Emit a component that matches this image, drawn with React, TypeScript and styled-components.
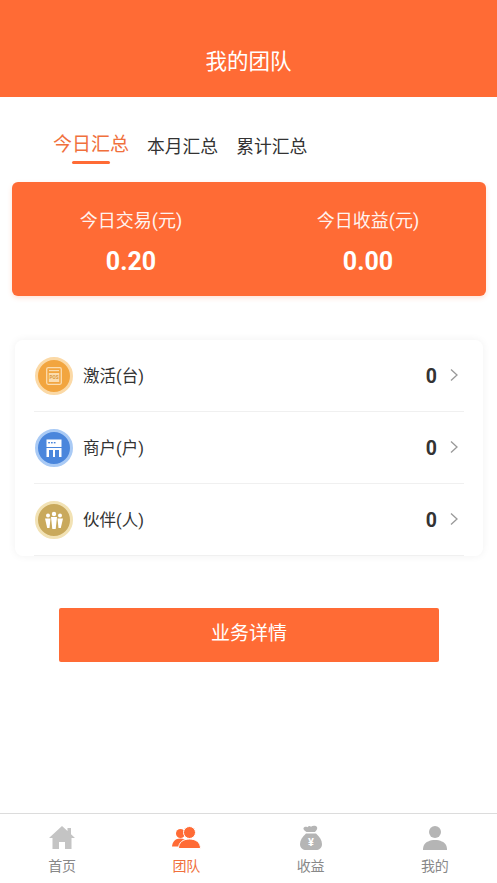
import React from "react";
import styled, { createGlobalStyle } from "styled-components";

const Global = createGlobalStyle`
  html, body { margin: 0; padding: 0; background: #fff; }
  body { font-family: Roboto, "Noto Sans CJK SC", sans-serif; }
  * { box-sizing: border-box; }
`;

const ORANGE = "#ff6b35";

const Page = styled.div`
  width: 497px;
  height: 883px;
  display: flex;
  flex-direction: column;
  overflow: hidden;
`;
const Header = styled.header`
  height: 97px;
  flex: none;
  background: ${ORANGE};
  color: #fff;
  font-size: 21.5px;
  line-height: 30px;
  text-align: center;
  padding-top: 47px;
`;
const Content = styled.main`
  flex: 1;
  display: flex;
  flex-direction: column;
`;
const Tabs = styled.nav`
  display: flex;
  align-items: flex-start;
  height: 85px;
  padding: 33px 0 0 53px;
`;
const Tab = styled.div<{ $active?: boolean }>`
  display: flex;
  flex-direction: column;
  align-items: center;
  margin-right: 18px;
  color: ${(p) => (p.$active ? "#f0703c" : "#333")};
  font-size: ${(p) => (p.$active ? 19 : 17.8)}px;
  line-height: 28px;
  padding-top: ${(p) => (p.$active ? 1 : 3)}px;
`;
const TabLine = styled.span`
  width: 38px;
  height: 3px;
  margin-top: 2px;
  border-radius: 2px;
  background: ${ORANGE};
`;
const Summary = styled.section`
  margin: 0 11px 0 12px;
  height: 114px;
  background: ${ORANGE};
  border-radius: 6px;
  box-shadow: 0 2px 5px rgba(255, 107, 53, 0.2);
  color: #fff;
  display: grid;
  grid-template-columns: 238px 236px;
  padding-top: 26px;
`;
const Stat = styled.div`
  text-align: center;
`;
const StatLabel = styled.div`
  font-size: 18px;
  line-height: 26px;
  opacity: 0.92;
`;
const StatValue = styled.div`
  font-size: 25px;
  font-weight: 700;
  line-height: 30px;
  margin-top: 13px;
`;
const ListCard = styled.section`
  margin: 44px 14px 0 15px;
  height: 216px;
  background: #fff;
  border-radius: 8px;
  box-shadow: 0 0 8px rgba(0, 0, 0, 0.06);
  padding: 0 19px;
`;
const Row = styled.div`
  height: 72px;
  display: flex;
  align-items: center;
  border-bottom: 1px solid #f0f0f0;
  padding-top: 1px;
`;
const IconRing = styled.div<{ $c: string; $r: string }>`
  width: 38px;
  height: 38px;
  margin-left: 1px;
  border-radius: 50%;
  background: ${(p) => p.$c};
  border: 3px solid ${(p) => p.$r};
  display: flex;
  align-items: center;
  justify-content: center;
`;
const RowLabel = styled.div`
  flex: 1;
  margin: 2px 0 0 10px;
  font-size: 16.5px;
  line-height: 24px;
  color: #333;
`;
const RowValue = styled.div`
  margin-top: 2px;
  font-size: 19.5px;
  font-weight: 700;
  line-height: 24px;
  color: #333;
`;
const Chevron = styled.svg`
  width: 10px;
  height: 16px;
  margin: -3px 5px 0 12px;
`;
const Action = styled.button`
  display: block;
  margin: 52px 0 0 59px;
  width: 380px;
  height: 54px;
  border: 0;
  border-radius: 2px;
  background: ${ORANGE};
  color: #fff;
  font: inherit;
  font-size: 19px;
  padding: 0 0 7px;
`;
const TabBar = styled.footer`
  height: 70px;
  flex: none;
  border-top: 1px solid #dcdcdc;
  background: #fff;
  display: grid;
  grid-template-columns: repeat(4, 1fr);
`;
const BarItem = styled.div<{ $active?: boolean }>`
  display: flex;
  flex-direction: column;
  align-items: center;
  padding-top: 11px;
  color: ${(p) => (p.$active ? "#f0703c" : "#888")};
  font-size: 14px;
  line-height: 20px;
`;
const BarIcon = styled.svg`
  width: 30px;
  height: 26px;
  margin-bottom: 5px;
`;

const Pos = () => (
  <svg width="22" height="22" viewBox="0 0 22 22">
    <rect x="3.7" y="2.7" width="14.6" height="16.6" rx="1.5" fill="none" stroke="#fbdcae" strokeWidth="1.3" />
    <rect x="6" y="5" width="10" height="1.2" fill="#fbdcae" />
    <rect x="5.8" y="8" width="10.4" height="9" fill="#fbdcae" />
    <text x="11" y="14.4" fontSize="4.6" fontWeight="700" fill="#d9963a" textAnchor="middle" fontFamily="Roboto">POS</text>
  </svg>
);
const Shop = () => (
  <svg width="22" height="22" viewBox="0 0 22 22">
    <rect x="3.5" y="2.5" width="15" height="7.5" fill="#fff" />
    <rect x="5.2" y="5" width="1.7" height="1.4" fill="#4a86dc" />
    <rect x="8" y="5" width="1.7" height="1.4" fill="#4a86dc" />
    <rect x="10.800" y="5" width="1.7" height="1.4" fill="#4a86dc" />
    <rect x="3.5" y="11" width="15" height="9" fill="#fff" />
    <rect x="6" y="13" width="4" height="7" fill="#4a86dc" />
    <rect x="12" y="13" width="4" height="7" fill="#4a86dc" />
  </svg>
);
const People = () => (
  <svg width="24" height="24" viewBox="0 0 24 24" fill="#fff">
    <circle cx="6" cy="7.5" r="2" />
    <circle cx="12" cy="6" r="2.200" />
    <circle cx="18" cy="7.500" r="2" />
    <path d="M3 10.500h5.500L7.500 20H5.200z" />
    <path d="M9 9h6l-1.300 12h-3.400z" />
    <path d="M15.500 10.500H21L18.800 20h-2.300z" />
  </svg>
);

const rows = [
  { label: "激活(台)", c: "#f2a53f", r: "#fbd9a6", icon: <Pos /> },
  { label: "商户(户)", c: "#4a86dc", r: "#a9caf5", icon: <Shop /> },
  { label: "伙伴(人)", c: "#c9a95c", r: "#f2e2b4", icon: <People /> },
];

export default function App() {
  return (
    <Page>
      <Global />
      <Header>我的团队</Header>
      <Content>
        <Tabs>
          <Tab $active>
            今日汇总
            <TabLine />
          </Tab>
          <Tab>本月汇总</Tab>
          <Tab>累计汇总</Tab>
        </Tabs>
        <Summary>
          <Stat>
            <StatLabel>今日交易(元)</StatLabel>
            <StatValue>0.20</StatValue>
          </Stat>
          <Stat>
            <StatLabel>今日收益(元)</StatLabel>
            <StatValue>0.00</StatValue>
          </Stat>
        </Summary>
        <ListCard>
          {rows.map((r) => (
            <Row key={r.label}>
              <IconRing $c={r.c} $r={r.r}>{r.icon}</IconRing>
              <RowLabel>{r.label}</RowLabel>
              <RowValue>0</RowValue>
              <Chevron viewBox="0 0 10 16">
                <path d="M2 2.500l6 5.500-6 5.500" fill="none" stroke="#999" strokeWidth="1.300" />
              </Chevron>
            </Row>
          ))}
        </ListCard>
        <Action>业务详情</Action>
      </Content>
      <TabBar>
        <BarItem>
          <BarIcon viewBox="0 0 30 26">
            <path d="M15 1L2 13h3.500v11h6.500v-7h6v7h6.500V13H28l-4-3.700V3h-3.500v3z" fill="#c4c4c4" />
          </BarIcon>
          首页
        </BarItem>
        <BarItem $active>
          <BarIcon viewBox="0 0 30 26">
            <circle cx="9.500" cy="8.500" r="4.500" fill={ORANGE} />
            <path d="M1 21.500c.5-4.500 3-8 8.500-8 3 0 5 1 6 2l-4 6z" fill={ORANGE} />
            <circle cx="18.500" cy="7.500" r="6" fill={ORANGE} stroke="#fff" strokeWidth="1" />
            <path d="M7.500 23.500c0-6 4.500-9.500 11-9.500s11 3.500 11 9.500z" fill={ORANGE} stroke="#fff" strokeWidth="1" />
          </BarIcon>
          团队
        </BarItem>
        <BarItem>
          <BarIcon viewBox="0 0 30 26">
            <path d="M7.500 3c1-1.500 2.500-1.500 4 -.8 1-1.500 2.500-1.700 3.500-.5 1.500-1.200 5-1.200 6 .3 .8 1.500-.5 3.500-2 5h-8.500C8.500 5.800 7 4.500 7.500 3z" fill="#b5b5b5" />
            <path d="M10 8.500h10c3.500 3 6 7 6 10.500 0 4-3 6-6 6H10c-3 0-6-2-6-6 0-3.500 2.500-7.500 6-10.500z" fill="#b5b5b5" />
            <text x="15" y="21" fontSize="11" fontWeight="700" fill="#fff" textAnchor="middle" fontFamily="Roboto">¥</text>
          </BarIcon>
          收益
        </BarItem>
        <BarItem>
          <BarIcon viewBox="0 0 30 26">
            <circle cx="15" cy="7" r="6" fill="#b5b5b5" />
            <path d="M3 25c0-1 0-3 1-5 1.500-3 6-5 11-5s9.500 2 11 5c1 2 1 4 1 5z" fill="#b5b5b5" />
          </BarIcon>
          我的
        </BarItem>
      </TabBar>
    </Page>
  );
}
